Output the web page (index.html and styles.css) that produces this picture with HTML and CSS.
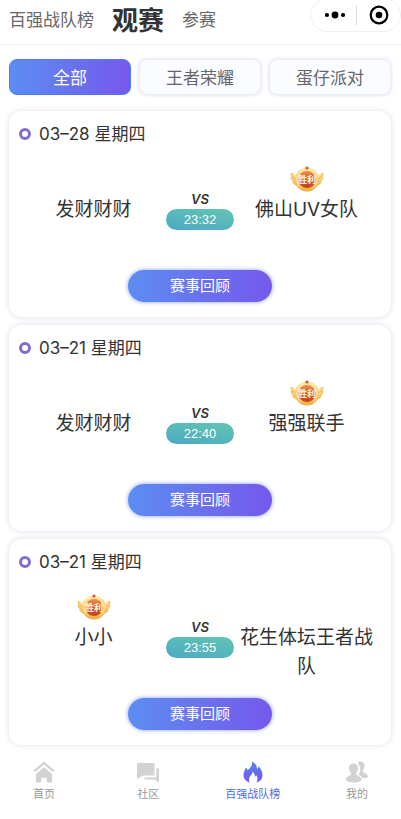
FILE: index.html
```html
<!DOCTYPE html>
<html lang="zh-CN">
<head>
<meta charset="utf-8">
<meta name="viewport" content="width=device-width, initial-scale=1">
<title>观赛</title>
<link rel="stylesheet" href="styles.css">
</head>
<body>
<svg class="defs" aria-hidden="true">
  <defs>
    <linearGradient id="gold" x1="0" y1="0" x2="0" y2="1"><stop offset="0" stop-color="#ffe9a0"/><stop offset="1" stop-color="#efa63a"/></linearGradient>
    <linearGradient id="red" x1="0" y1="0" x2="0" y2="1"><stop offset="0" stop-color="#f08a4c"/><stop offset="1" stop-color="#c33a1c"/></linearGradient>
    <linearGradient id="flame" x1="0" y1="0" x2="0" y2="1"><stop offset="0" stop-color="#4f86f2"/><stop offset="1" stop-color="#7656ee"/></linearGradient>
    <symbol id="win" viewBox="0 0 34 26">
      <path d="M8 20C3 19 1 15 1 7c3 0 5 2 7 5zM26 20c5-1 7-5 7-13-3 0-5 2-7 5z" fill="#fde3a0"/>
      <path d="M1 7c1 4 4 6 7 7M1 11c1 4 4 5 7 6M3 16c2 3 4 3 7 4M33 7c-1 4-4 6-7 7M33 11c-1 4-4 5-7 6M31 16c-2 3-4 3-7 4" fill="none" stroke="#f3bf58" stroke-width="1.4"/>
      <circle cx="17" cy="13.500" r="12" fill="url(#gold)"/>
      <circle cx="17" cy="13.500" r="10.300" fill="none" stroke="#fff0b8" stroke-width="1"/>
      <circle cx="17" cy="13.500" r="8.500" fill="url(#red)"/>
      <path d="M10 21q7 4 14 0l-2 3q-5 2.500-10 0z" fill="#f2b347"/>
      <circle cx="17" cy="2" r="1.600" fill="#dd5436"/>
      <text x="17" y="17" text-anchor="middle" class="win-text">胜利</text>
    </symbol>
  </defs>
</svg>

<header class="topbar">
  <nav class="sections">
    <a href="#rank">百强战队榜</a>
    <a href="#watch" class="current">观赛</a>
    <a href="#join">参赛</a>
  </nav>
  <div class="capsule">
    <button type="button" aria-label="更多"><svg width="20" height="8" viewBox="0 0 20 8"><circle cx="2" cy="4" r="2.100"/><circle cx="10" cy="4" r="3.400"/><circle cx="18" cy="4" r="2.100"/></svg></button>
    <button type="button" aria-label="关闭"><svg width="20" height="20" viewBox="0 0 20 20"><circle cx="10" cy="10" r="8.300" fill="none" stroke="#000" stroke-width="2.200"/><circle cx="10" cy="10" r="3.300"/></svg></button>
  </div>
</header>

<main>
  <div class="filters">
    <button type="button" class="filter active">全部</button>
    <button type="button" class="filter">王者荣耀</button>
    <button type="button" class="filter">蛋仔派对</button>
  </div>

  <article class="card">
    <h2>03–28 星期四</h2>
    <div class="match">
      <div class="team"><div class="medal"></div><p>发财财财</p></div>
      <div class="versus"><em>VS</em><time>23:32</time></div>
      <div class="team"><div class="medal"><svg><use href="#win"/></svg></div><p>佛山UV女队</p></div>
    </div>
    <button type="button" class="review">赛事回顾</button>
  </article>

  <article class="card">
    <h2>03–21 星期四</h2>
    <div class="match">
      <div class="team"><div class="medal"></div><p>发财财财</p></div>
      <div class="versus"><em>VS</em><time>22:40</time></div>
      <div class="team"><div class="medal"><svg><use href="#win"/></svg></div><p>强强联手</p></div>
    </div>
    <button type="button" class="review">赛事回顾</button>
  </article>

  <article class="card">
    <h2>03–21 星期四</h2>
    <div class="match">
      <div class="team"><div class="medal"><svg><use href="#win"/></svg></div><p>小小</p></div>
      <div class="versus"><em>VS</em><time>23:55</time></div>
      <div class="team"><div class="medal"></div><p>花生体坛王者战队</p></div>
    </div>
    <button type="button" class="review">赛事回顾</button>
  </article>
</main>

<nav class="tabbar">
  <a href="#home">
    <svg viewBox="0 0 22 22"><path d="M11 .5l10.500 9-1.500 1.800-9-7.700-9 7.700L.5 9.500z"/><path d="M11 6.200l8 6.800V21.500h-5.200v-4.800H8.200v4.800H3V13z"/></svg>
    首页
  </a>
  <a href="#community">
    <svg viewBox="0 0 22 22"><path d="M0 2h17.500v12.500H6L0 18z"/><path d="M19.300 7.500H22v14.200l-4.500-3.300H7.500v-2h11.800z"/></svg>
    社区
  </a>
  <a href="#rank" class="active">
    <svg viewBox="0 0 22 22"><path fill="url(#flame)" d="M10 .5c4 2.200 5 4.800 5 7.500 1-.6 1.500-1.500 1.500-3C19 8 20.500 11 20.500 14c0 4-2.500 6.500-6 7.500 1.500-2.500 1.500-5-.5-7.500-.2 1-.6 1.500-1.200 1.700.1-2-.7-3.700-2.200-5.200.2 3-3.600 4.500-3.600 8 0 1.200.4 2.200 1 3-3.800-1-6.500-3.500-6.500-7.500 0-3.200 1.800-5 2.300-7.500 1 .8 1.500 1.700 1.700 2.800C8.500 7 10.500 4.500 10 .5z"/></svg>
    百强战队榜
  </a>
  <a href="#me">
    <svg viewBox="0 0 22 22"><path d="M11.500 1.800C15-1 19 1.200 18.500 5.500c-.2 2-1.100 3.300-2 4.300.2 2.200 5.500 2.700 5.500 5.700 0 1.200-2 1.800-5.500 1.800-1-2-2.500-3-4-3.800 2.500-3.500 2.500-8.200-1-11.700z"/><path d="M7.500 2.500c3 0 4.700 2.300 4.500 5.300-.1 2.200-1 3.700-2 4.700.1 2.500 5.500 2.500 5.500 6 0 2-3 3-7.700 3S0 20.500 0 18.500c0-3.500 5-3.500 5.200-6-1-1-2-2.500-2.100-4.700C2.900 4.800 4.500 2.500 7.500 2.500z"/></svg>
    我的
  </a>
</nav>
</body>
</html>
```
FILE: styles.css
```css
*,
*::before {
  box-sizing: border-box;
}

body {
  margin: 0;
  background: #fff;
  color: #333;
  font-family: Inter, "Noto Sans CJK SC", sans-serif;
}

a {
  color: inherit;
  text-decoration: none;
}

button {
  margin: 0;
  padding: 0;
  border: 0;
  background: none;
  color: inherit;
  font: inherit;
}

.defs {
  position: absolute;
  width: 0;
  height: 0;
}

.topbar {
  display: flex;
  justify-content: space-between;
  height: 45px;
  padding-left: 9px;
  border-bottom: 1px solid #f5f5f5;
}

.sections {
  display: flex;
  align-items: center;
  gap: 18px;
  height: 36px;
  color: #666;
  font-size: 17px;
  white-space: nowrap;
}

.sections .current {
  color: #333;
  font-size: 26px;
  font-weight: 600;
}

.capsule {
  display: flex;
  align-items: center;
  width: 91px;
  height: 34px;
  margin-top: -2px;
  padding-left: 2px;
  border: 1px solid #f0f0f0;
  border-radius: 17px;
}

.capsule button {
  display: flex;
  flex: 1;
  align-items: center;
  justify-content: center;
  height: 20px;
}

.capsule button + button {
  border-left: 1px solid #ddd;
}

main {
  display: flex;
  flex-direction: column;
  gap: 8px;
  padding: 14px 10px 0 9px;
}

.filters {
  display: grid;
  grid-template-columns: repeat(3, 1fr);
  gap: 8px;
  margin-bottom: 8px;
}

.filter {
  height: 36px;
  padding-bottom: 2px;
  border: 1px solid #ebecf5;
  border-radius: 8px;
  background: #fbfcff;
  box-shadow: 0 0 4px #dcdeee;
  color: #666;
  font-size: 17px;
}

.filter.active {
  border-color: #4a7df5;
  background: linear-gradient(90deg, #5c8df2, #7658ec);
  box-shadow: none;
  color: #fff;
}

.card {
  display: flex;
  flex-direction: column;
  align-items: center;
  min-height: 206px;
  padding: 10px 17px 15px;
  border-radius: 13px;
  background: #fff;
  box-shadow: 0 0 6px #dddeea;
}

.card h2 {
  display: flex;
  align-items: center;
  align-self: flex-start;
  gap: 8px;
  height: 26px;
  margin: 0 0 0 -7px;
  font-size: 17px;
  font-weight: 400;
  line-height: 24px;
}

.card h2::before {
  content: "";
  width: 12px;
  height: 12px;
  border: 3px solid #846bd2;
  border-radius: 50%;
}

.match {
  display: grid;
  flex: 1;
  grid-template-columns: 1fr 68px 1fr;
  gap: 5px;
  width: 100%;
}

.team {
  padding-top: 19px;
  text-align: center;
}

.medal {
  height: 29px;
}

.medal svg {
  display: block;
  width: 34px;
  height: 26px;
  margin: 0 auto;
}

.win-text {
  fill: #fff4df;
  font-size: 9px;
  font-weight: 700;
}

.team p {
  margin: 0;
  font-size: 19px;
  line-height: 29px;
}

.versus {
  display: flex;
  flex-direction: column;
  align-items: center;
  padding-top: 42px;
}

.versus em {
  font-size: 13px;
  font-weight: 600;
  line-height: 20px;
}

.versus time {
  width: 100%;
  border-radius: 11px;
  background: linear-gradient(10deg, #4ca9c4, #62c5b2);
  color: #fff;
  font-family: "Liberation Sans", sans-serif;
  font-size: 13px;
  line-height: 21px;
  text-align: center;
}

.review {
  width: 144px;
  height: 32px;
  padding-bottom: 3px;
  border-radius: 16px;
  background: linear-gradient(90deg, #5c8df2, #7658ec);
  box-shadow: 0 0 4px #8299e8;
  color: #fff;
  font-size: 15px;
}

.tabbar {
  display: flex;
  justify-content: space-between;
  padding: 16px 14px 18px;
  color: #999;
  font-size: 11px;
}

.tabbar a {
  display: flex;
  flex-direction: column;
  align-items: center;
  gap: 2px;
  width: 60px;
  line-height: 18px;
}

.tabbar svg {
  width: 22px;
  height: 22px;
  fill: #d2d2d2;
}

.tabbar .active {
  color: #5468ed;
}
```
